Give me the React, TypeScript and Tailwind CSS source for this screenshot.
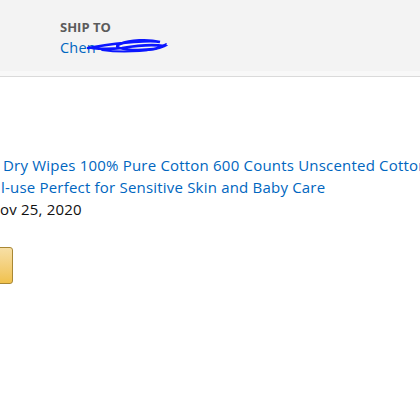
import React from "react";

export default function App() {
  return (
    <div
      className="w-[420px] h-[420px] overflow-hidden bg-white"
      style={{ fontFamily: '"Open Sans", "Noto Sans", Arial, sans-serif' }}
    >
      {/* Header strip */}
      <div className="h-[77px] bg-[#f3f3f3] border-b border-[#dadada] flex flex-col">
        <div className="flex-1 pl-[60px] pt-[19px]">
          <div className="text-[13px] leading-[16px] font-bold text-[#5b5b5b]">SHIP TO</div>
          <div className="relative mt-[4px] text-[14.5px] leading-[18px] tracking-[0.2px] text-[#0066c0] w-fit">
            Chen
            <span className="inline-block w-[72px]" />
            <svg
              className="absolute left-[26px] top-[-3px]"
              width="82"
              height="20"
              viewBox="0 0 82 20"
              fill="none"
            >
              <path
                d="M2 12 C14 10 30 7 48 6 C60 5 70 5 74 6 C62 3 44 4 34 8 C26 11 36 14 52 14 C64 14 74 12 78 10 C66 8 48 10 36 12 C26 13 14 13 6 12"
                stroke="#0b16ff"
                strokeWidth="2.6"
                strokeLinecap="round"
              />
              <path d="M16 14 C30 16 50 16 70 13 L80 8" stroke="#0b16ff" strokeWidth="1.8" strokeLinecap="round" />
            </svg>
          </div>
        </div>
        <div className="h-[5px] bg-[#f8f8f8]" />
      </div>

      {/* Item details */}
      <div className="pt-[77px] text-[15px] leading-[22px] tracking-[0.2px]">
        <div className="pl-[3px] whitespace-nowrap text-[#0066c0]">
          Dry Wipes 100% Pure Cotton 600 Counts Unscented Cotton
        </div>
        <div className="pl-[1px] whitespace-nowrap text-[#0066c0]">
          l-use Perfect for Sensitive Skin and Baby Care
        </div>
        <div className="whitespace-nowrap text-[#111111]">ov 25, 2020</div>
      </div>

      {/* Button edge */}
      <div className="mt-[27px] -ml-[20px] w-[33px] h-[37px] rounded-[3px] border border-[#a88734] bg-gradient-to-b from-[#f7dfa5] to-[#f0c14b]" />
    </div>
  );
}
